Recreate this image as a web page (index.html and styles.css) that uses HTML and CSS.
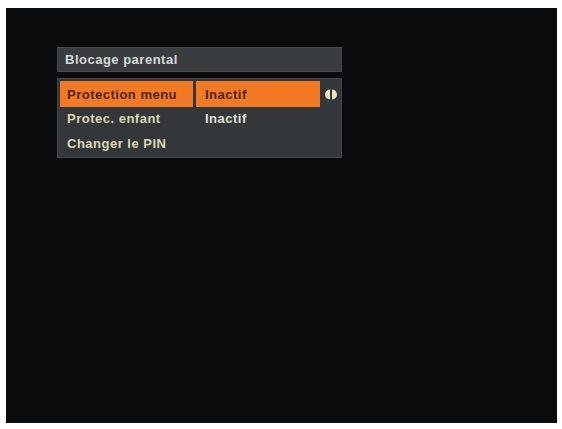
FILE: index.html
```html
<!DOCTYPE html>
<html>
<head>
<meta charset="utf-8">
<link rel="stylesheet" href="styles.css">
</head>
<body>
<div class="screen">
  <div class="menu">
    <div class="title">Blocage parental</div>
    <div class="panel">
      <div class="row active">
        <div class="label">Protection menu</div>
        <div class="value">Inactif</div>
        <svg class="arrows" width="16" height="11" viewBox="0 0 16 11">
          <path d="M7 0.5 A5 5 0 0 0 7 10.5 Z" fill="#e8e4bc"/>
          <path d="M9 0.5 A5 5 0 0 1 9 10.5 Z" fill="#e8e4bc"/>
        </svg>
      </div>
      <div class="row">
        <div class="label">Protec. enfant</div>
        <div class="value">Inactif</div>
      </div>
      <div class="row">
        <div class="label">Changer le PIN</div>
      </div>
    </div>
  </div>
</div>
</body>
</html>
```
FILE: styles.css
```css
html, body {
  margin: 0;
  padding: 0;
  background: #ffffff;
}
body {
  width: 562px;
  height: 429px;
  overflow: hidden;
  font-family: "Liberation Sans", Arial, sans-serif;
}
.screen {
  margin: 8px 5px 0 6px;
  width: 551px;
  height: 415px;
  background: #0a0b0d;
  box-sizing: border-box;
  padding: 39px 0 0 51px;
}
.menu {
  width: 285px;
  display: flex;
  flex-direction: column;
  gap: 6px;
}
.title {
  height: 25px;
  box-sizing: border-box;
  background: #3a3d3f;
  border: 1px solid #45494b;
  color: #d6dadb;
  font-size: 13px;
  font-weight: bold;
  letter-spacing: 0.5px;
  line-height: 23px;
  padding-left: 7px;
}
.panel {
  height: 80px;
  box-sizing: border-box;
  background: #33373a;
  border: 1px solid #424649;
  padding: 2px 2px 0 2px;
  display: flex;
  flex-direction: column;
}
.row {
  height: 25px;
  display: flex;
  align-items: center;
  gap: 3px;
  font-size: 13px;
  font-weight: bold;
  letter-spacing: 0.5px;
}
.row.active {
  height: 26px;
  margin-bottom: -1px;
}
.label {
  width: 133px;
  flex-shrink: 0;
  height: 100%;
  box-sizing: border-box;
  padding-left: 7px;
  display: flex;
  align-items: center;
  color: #dcd9b2;
}
.value {
  width: 124px;
  flex-shrink: 0;
  height: 100%;
  box-sizing: border-box;
  padding-left: 9px;
  display: flex;
  align-items: center;
  color: #e2e2da;
}
.row.active .label,
.row.active .value {
  background: #f27a24;
  color: #4a2414;
}
.arrows {
  flex-shrink: 0;
  display: block;
}
```
